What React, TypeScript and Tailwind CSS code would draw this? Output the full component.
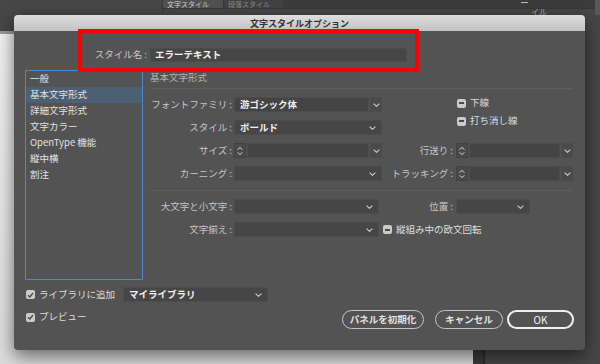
import type { ReactNode } from 'react';

const FONT = "font-['Noto_Sans_CJK_JP','Noto_Sans',sans-serif]";

function Chevron() {
  return (
    <svg width="7" height="4" viewBox="0 0 7 4" className="text-[#cfcfcf]">
      <path d="M0.6 0.6L3.5 3.3L6.4 0.6" fill="none" stroke="currentColor" strokeWidth="1.1" />
    </svg>
  );
}

function Spinner() {
  return (
    <div className="w-[12px] h-[15px] bg-[#4a4a4a] border border-[#424242] flex flex-col items-center justify-center gap-[2px]">
      <svg width="6" height="3" viewBox="0 0 6 3" className="text-[#cfcfcf]">
        <path d="M0.5 2.6L3 0.5L5.5 2.6" fill="none" stroke="currentColor" strokeWidth="1" />
      </svg>
      <svg width="6" height="3" viewBox="0 0 6 3" className="text-[#cfcfcf]">
        <path d="M0.5 0.4L3 2.5L5.5 0.4" fill="none" stroke="currentColor" strokeWidth="1" />
      </svg>
    </div>
  );
}

// plain select: one box, chevron at the right
function Select({ className, value }: { className: string; value?: string }) {
  return (
    <div className={`${className} h-[15px] bg-[#464646] border border-[#4c4c4c] flex items-center justify-between pl-[5px] pr-[5px]`}>
      <span className="text-[9.5px] font-bold text-[#f0f0f0] leading-none">{value}</span>
      <Chevron />
    </div>
  );
}

// combo box: text field + separate chevron button
function Combo({ className, value }: { className: string; value?: string }) {
  return (
    <div className={`${className} h-[15px] flex gap-[1px]`}>
      <div className="flex-1 bg-[#444444] border border-[#4c4c4c] flex items-center pl-[5px]">
        <span className="text-[9.5px] font-bold text-[#f0f0f0] leading-none">{value}</span>
      </div>
      <div className="w-[12px] bg-[#4a4a4a] border border-[#4c4c4c] flex items-center justify-center">
        <Chevron />
      </div>
    </div>
  );
}

function Dash() {
  return (
    <div className="w-[9px] h-[9px] rounded-[2px] bg-[#cbcbcb] flex items-center justify-center shrink-0">
      <div className="w-[5px] h-[2px] bg-[#4a4a4a]" />
    </div>
  );
}

function Checked() {
  return (
    <div className="w-[9px] h-[9px] rounded-[2px] bg-[#cbcbcb] flex items-center justify-center shrink-0">
      <svg width="7" height="6" viewBox="0 0 7 6">
        <path d="M1 3.2L2.8 5L6 1" fill="none" stroke="#4a4a4a" strokeWidth="1.3" />
      </svg>
    </div>
  );
}

function Label({ className, children }: { className: string; children: ReactNode }) {
  return (
    <div className={`${className} text-right text-[9.5px] text-[#c6c6c6] leading-none whitespace-nowrap`}>
      {children}
    </div>
  );
}

const items = ['一般', '基本文字形式', '詳細文字形式', '文字カラー', 'OpenType 機能', '縦中横', '割注'];

export default function App() {
  return (
    <div className={`${FONT} relative w-[600px] h-[364px] overflow-hidden bg-[#474747]`}>
      {/* panel behind, top */}
      <div className="absolute left-[162px] top-0 w-[433px] h-[15px] bg-[#464646] border-l border-[#3a3a3a]">
        <div className="h-[9px] flex bg-[#3c3c3c] border-b border-[#383838]">
          <div className="w-[60px] bg-[#515151] text-[7px] text-[#d0d0d0] leading-[8px] pl-[4px]">文字スタイル</div>
          <div className="w-[60px] bg-[#424242] border-l border-[#383838] text-[7px] text-[#8a8a8a] leading-[8px] pl-[4px]">段落スタイル</div>
          <div className="flex-1 flex justify-end pr-[67px] pt-[2px]">
            <div className="w-[7px] h-[1px] bg-[#bdbdbd]" />
          </div>
        </div>
        <div className="flex justify-end pr-[48px] text-[8px] text-[#a8a8a8] leading-[6px]">イル</div>
      </div>
      <div className="absolute left-[595px] top-0 w-[5px] h-[15px] bg-[#5a5a5a]" />

      {/* document canvas behind, left */}
      <div className="absolute left-0 top-[31px] w-[473px] h-[333px] bg-gradient-to-b from-[#f2f2f2] to-[#dcdcdc] border-t-[3px] border-[#9a9a9a]" />
      <div className="absolute left-[473px] top-[300px] w-[12px] h-[64px] bg-[#3b3b3b] border-r-[2px] border-[#2d2d2d]" />

      {/* dialog */}
      <div className="absolute left-[14px] top-[15px] w-[571px] h-[335px] bg-[#535353] rounded-[4px] shadow-[0_6px_18px_rgba(0,0,0,0.55)] flex flex-col">
        <div className="h-[16px] rounded-t-[4px] bg-gradient-to-b from-[#dedede] to-[#c2c2c2] flex items-center justify-center">
          <span className="text-[9px] font-bold text-[#333333] leading-none">文字スタイルオプション</span>
        </div>

        {/* style name */}
        <div className="mt-[17px] h-[14px] flex items-center">
          <Label className="w-[133px]">スタイル名 :</Label>
          <div className="ml-[3px] w-[257px] h-[14px] bg-[#464646] border border-[#4c4c4c] flex items-center pl-[4px]">
            <span className="text-[9.5px] font-bold text-[#f2f2f2] leading-none">エラーテキスト</span>
          </div>
        </div>

        {/* main */}
        <div className="mt-[8px] flex pl-[11px]">
          <div className="w-[118px] h-[210px] border border-[#4a89cf] flex flex-col">
            {items.map((t, i) => (
              <div
                key={t}
                className={`h-[16px] flex items-center pl-[4px] text-[9.5px] leading-none text-[#e2e2e2] ${i === 1 ? 'bg-[#4c6075]' : ''}`}
              >
                {t}
              </div>
            ))}
          </div>

          <div className="ml-[7px] w-[423px] flex flex-col">
            <div className="h-[19px] border-b border-[#5e5e5e] flex items-center">
              <span className="text-[9.5px] text-[#b4b4b4] leading-none -mt-[2px]">基本文字形式</span>
            </div>

            <div className="mt-[8px] flex">
              <div className="w-[232px] flex flex-col gap-[8px]">
                <div className="flex items-center gap-[2px]">
                  <Label className="w-[82px]">フォントファミリ :</Label>
                  <Combo className="w-[148px]" value="游ゴシック体" />
                </div>
                <div className="flex items-center gap-[2px]">
                  <Label className="w-[82px]">スタイル :</Label>
                  <Select className="w-[148px]" value="ボールド" />
                </div>
                <div className="flex items-center gap-[2px]">
                  <Label className="w-[82px]">サイズ :</Label>
                  <Spinner />
                  <Combo className="w-[135px] -ml-[1px]" />
                </div>
                <div className="flex items-center gap-[2px]">
                  <Label className="w-[82px]">カーニング :</Label>
                  <Select className="w-[148px]" />
                </div>
              </div>

              <div className="w-[191px] flex flex-col">
                <div className="h-[12px] pl-[75px] flex items-center gap-[4px]">
                  <Dash />
                  <span className="text-[9.5px] text-[#dedede] leading-none">下線</span>
                </div>
                <div className="mt-[6px] h-[12px] pl-[75px] flex items-center gap-[4px]">
                  <Dash />
                  <span className="text-[9.5px] text-[#dedede] leading-none">打ち消し線</span>
                </div>
                <div className="mt-[16px] flex items-center">
                  <Label className="w-[71px]">行送り :</Label>
                  <div className="ml-[3px]"><Spinner /></div>
                  <Combo className="w-[104px] ml-[1px]" />
                </div>
                <div className="mt-[8px] flex items-center">
                  <Label className="w-[71px]">トラッキング :</Label>
                  <div className="ml-[3px]"><Spinner /></div>
                  <Combo className="w-[104px] ml-[1px]" />
                </div>
              </div>
            </div>

            <div className="mt-[9px] border-t border-[#5e5e5e]" />

            <div className="mt-[8px] flex flex-col gap-[8px]">
              <div className="flex items-center">
                <Label className="w-[82px]">大文字と小文字 :</Label>
                <Select className="w-[145px] ml-[2px]" />
                <Label className="w-[74px]">位置 :</Label>
                <Select className="w-[74px] ml-[3px]" />
              </div>
              <div className="flex items-center">
                <Label className="w-[82px]">文字揃え :</Label>
                <Select className="w-[145px] ml-[2px]" />
                <div className="ml-[4px] flex items-center gap-[4px]">
                  <Dash />
                  <span className="text-[9.5px] text-[#dedede] leading-none">縦組み中の欧文回転</span>
                </div>
              </div>
            </div>
          </div>
        </div>

        {/* library */}
        <div className="mt-[7px] pl-[12px] h-[15px] flex items-center">
          <Checked />
          <span className="ml-[4px] w-[76px] text-[9.5px] text-[#dedede] leading-none whitespace-nowrap">ライブラリに追加</span>
          <Select className="ml-[8px] w-[145px]" value="マイライブラリ" />
        </div>

        {/* preview + buttons */}
        <div className="mt-[8px] pl-[12px] pr-[11px] flex items-start justify-between">
          <div className="h-[14px] flex items-center gap-[4px]">
            <Checked />
            <span className="text-[9.5px] text-[#dedede] leading-none">プレビュー</span>
          </div>
          <div className="flex items-center">
            <button className="w-[82px] h-[19px] rounded-full border border-[#c4c4c4] text-[9.5px] font-bold text-[#e2e2e2] leading-none">
              パネルを初期化
            </button>
            <button className="ml-[11px] w-[68px] h-[19px] rounded-full border border-[#c4c4c4] text-[9.5px] font-bold text-[#e2e2e2] leading-none">
              キャンセル
            </button>
            <button className="ml-[4px] w-[67px] h-[19px] rounded-full border-2 border-[#f0f0f0] text-[10px] text-[#f4f4f4] leading-none">
              OK
            </button>
          </div>
        </div>

        {/* annotation */}
        <div className="absolute left-[64px] top-[14px] w-[341px] h-[43px] border-4 border-[#ff0000]" />
      </div>
    </div>
  );
}
